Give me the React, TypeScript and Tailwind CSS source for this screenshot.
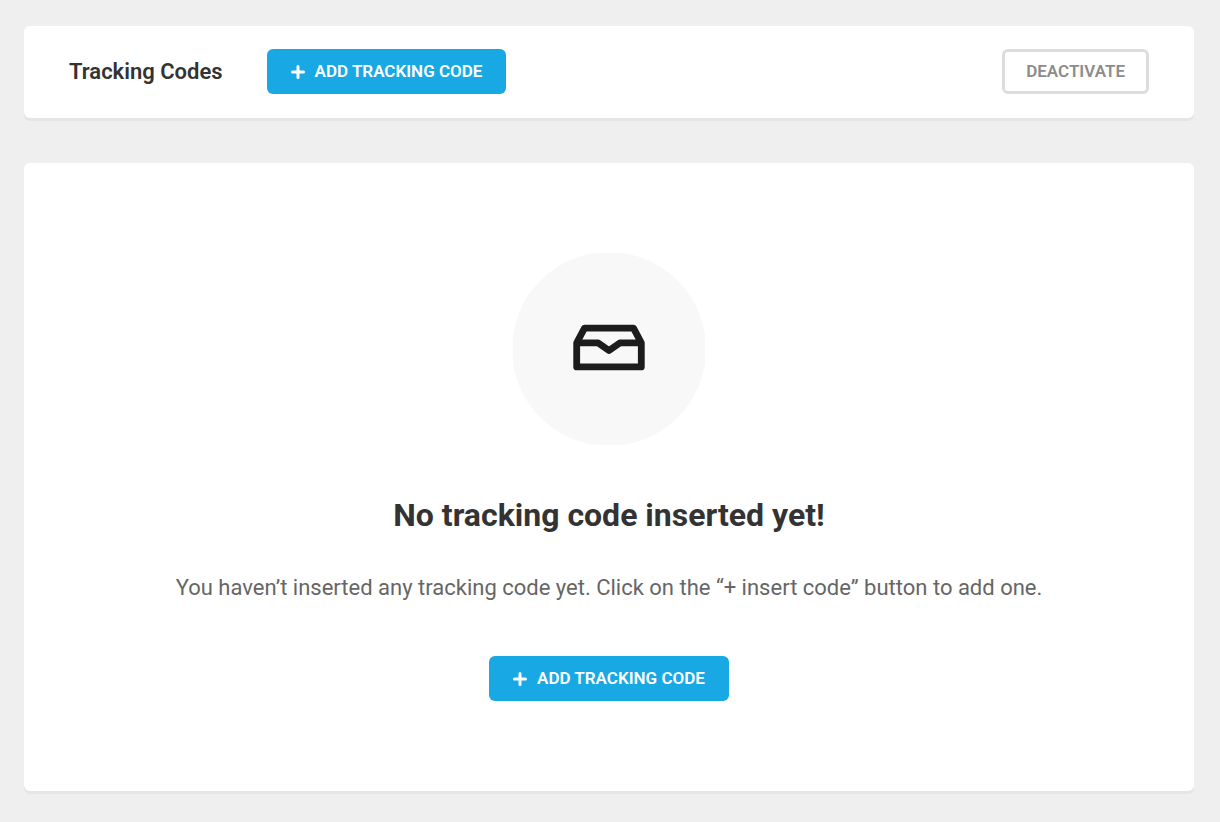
import type { ReactNode } from "react";

function PlusIcon() {
  return (
    <svg className="size-[14px] shrink-0" viewBox="0 0 14 14" fill="none" stroke="currentColor" strokeWidth="3" strokeLinecap="round" aria-hidden="true">
      <path d="M7 1.500v11M1.500 7h11" />
    </svg>
  );
}

function AddButton() {
  return (
    <button type="button" className="flex h-[45px] shrink-0 items-center gap-[10px] rounded-[6px] bg-[#18a8e4] px-[24px] text-[17px] font-semibold text-white">
      <PlusIcon />
      ADD TRACKING CODE
    </button>
  );
}

function Panel({ className, children }: { className: string; children: ReactNode }) {
  return <section className={`rounded-[6px] bg-white shadow-[0_3px_0_#e5e5e5] ${className}`}>{children}</section>;
}

function EmptyInbox() {
  return (
    <svg className="size-[192px]" viewBox="0 0 192 192" fill="none" aria-hidden="true">
      <circle cx="96" cy="96" r="97" fill="#f8f8f8" />
      <g stroke="#1c1c1c" strokeWidth="6.800" strokeLinejoin="round">
        <path d="M63.700 89.900 71.500 75.100H120.500L128.300 89.900V113.900H63.700Z" />
        <path d="M63.700 89.900H85.200L96 97.600L106.800 89.900H128.300" />
      </g>
    </svg>
  );
}

export default function App() {
  return (
    <main className="flex min-h-screen flex-col gap-[45px] bg-[#efefef] pt-[26px] pr-[26px] pb-[31px] pl-[24px] font-['Roboto',sans-serif] text-[#333]">
      <Panel className="flex items-center px-[45px] pt-[23px] pb-[24px]">
        <h1 className="mr-[44px] text-[22px] font-semibold">Tracking Codes</h1>
        <AddButton />
        <button type="button" className="ml-auto h-[45px] rounded-[6px] border-[3px] border-[#ddd] px-[21px] text-[17px] font-semibold text-[#8c8c8c]">
          DEACTIVATE
        </button>
      </Panel>
      <Panel className="flex grow flex-col items-center px-[45px] pt-[90px] pb-[90px]">
        <EmptyInbox />
        <h2 className="mt-[50px] text-[32px] leading-[40px] font-bold">No tracking code inserted yet!</h2>
        <p className="mt-[37px] mb-[52px] text-[22px] leading-[32px] text-[#666]">
          You haven’t inserted any tracking code yet. Click on the “+ insert code” button to add one.
        </p>
        <AddButton />
      </Panel>
    </main>
  );
}
